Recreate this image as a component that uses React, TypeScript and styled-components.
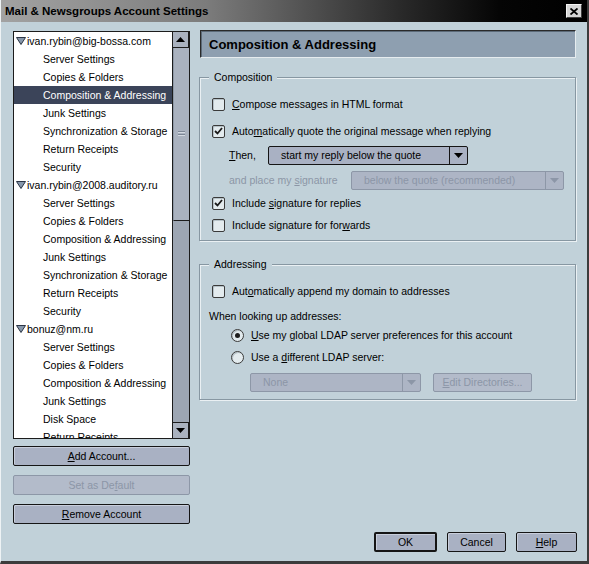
import React from 'react';
import styled, { createGlobalStyle } from 'styled-components';

const GlobalStyle = createGlobalStyle`
  html, body {
    margin: 0;
    padding: 0;
    background: #c1d1d9;
  }
  body {
    font-family: "Liberation Sans", Arial, sans-serif;
    font-size: 10.5px;
    color: #000;
  }
`;

const Window = styled.div`
  width: 589px;
  height: 564px;
  box-sizing: border-box;
  background: #c1d1d9;
  border-left: 1px solid #eef3f5;
  border-right: 2px solid #3c3c3c;
  border-bottom: 3px solid #3c3c3c;
  display: flex;
  flex-direction: column;
  overflow: hidden;
`;

const TitleBar = styled.div`
  height: 22px;
  flex: none;
  display: flex;
  align-items: center;
  justify-content: space-between;
  padding: 0 4px 0 4px;
  background: linear-gradient(to right, #a2a2a2 0%, #7c7c7c 35%, #2a2a2a 68%, #050505 85%, #000 100%);
  font-weight: bold;
  font-size: 11.5px;
  color: #000;
`;

const CloseButton = styled.div`
  width: 16px;
  height: 14px;
  box-sizing: border-box;
  background: #d6d6d6;
  border: 1px solid #f4f4f4;
  border-right-color: #404040;
  border-bottom-color: #404040;
  display: flex;
  align-items: center;
  justify-content: center;
  margin-right: 1px;
`;

const Body = styled.div`
  display: flex;
  gap: 9px;
  padding: 8px 0 0 12px;
`;

const LeftColumn = styled.div`
  width: 177px;
  display: flex;
  flex-direction: column;
`;

const Tree = styled.div`
  margin-top: 1px;
  height: 408px;
  box-sizing: border-box;
  border: 1px solid #1c1c1c;
  background: #fff;
  display: flex;
`;

const TreeList = styled.div`
  flex: 1;
  overflow: hidden;
`;

const TreeRow = styled.div<{ $level: number; $selected?: boolean }>`
  height: 18px;
  display: flex;
  align-items: center;
  white-space: nowrap;
  padding-left: ${p => (p.$level === 0 ? 2 : 29)}px;
  background: ${p => (p.$selected ? '#3b4459' : 'transparent')};
  color: ${p => (p.$selected ? '#fff' : '#000')};
`;

const Twisty = styled.svg`
  width: 10px;
  height: 8px;
  margin-right: 1px;
`;

const ScrollBar = styled.div`
  width: 16px;
  flex: none;
  border-left: 1px solid #1c1c1c;
  background: #9da6b3;
  display: flex;
  flex-direction: column;
`;

const ScrollArrow = styled.div<{ $down?: boolean }>`
  height: 16px;
  box-sizing: border-box;
  background: #aab2bf;
  border: 1px solid #1c1c1c;
  border-left: none;
  border-${p => (p.$down ? 'bottom' : 'top')}: none;
  display: flex;
  align-items: center;
  justify-content: center;
`;

const ScrollThumb = styled.div`
  height: 173px;
  box-sizing: border-box;
  background: #aab2bf;
  border-left: 1px solid #8e98a6;
  border-bottom: 1px solid #1c1c1c;
  display: flex;
  align-items: center;
  justify-content: center;
`;

const ScrollSpace = styled.div`
  flex: 1;
`;

const Grip = styled.div`
  width: 7px;
  height: 6px;
  background: repeating-linear-gradient(to bottom, #7d8796 0 1px, #d4dae2 1px 2px, transparent 2px 3px);
`;

const Button = styled.button<{ $default?: boolean; $width?: number }>`
  height: 20px;
  width: ${p => (p.$width ? `${p.$width}px` : '100%')};
  box-sizing: border-box;
  padding: 0;
  font-family: inherit;
  font-size: 10.5px;
  color: #000;
  background: #a9b1c3;
  border: ${p => (p.$default ? '2px' : '1px')} solid #151515;
  border-radius: 2px;
  box-shadow: inset 1px 1px 0 #c8cedb;
  display: flex;
  align-items: center;
  justify-content: center;

  &:disabled {
    background: #b3bbca;
    border-color: #8d97a7;
    color: #8c96a7;
    box-shadow: none;
  }
`;

const LeftButton = styled(Button)`
  margin-top: 9px;
  &:first-of-type {
    margin-top: 7px;
  }
`;

const EditButton = styled(Button)`
  height: 19px;
  margin-left: 12px;
`;

const RightColumn = styled.div`
  width: 377px;
  display: flex;
  flex-direction: column;
`;

const Header = styled.div`
  margin-left: 1px;
  width: 376px;
  height: 28px;
  box-sizing: border-box;
  background: #8e9fb0;
  border: 1px solid #2a2a2a;
  border-right-color: #e6ecef;
  border-bottom-color: #e6ecef;
  box-shadow: inset 1px 1px 0 #5c6a78;
  display: flex;
  align-items: center;
  padding-left: 8px;
  font-size: 13px;
  font-weight: bold;
`;

const Group = styled.div<{ $top: number; $height: number; $pb: number }>`
  position: relative;
  margin-top: ${p => p.$top}px;
  height: ${p => p.$height}px;
  box-sizing: border-box;
  border: 1px solid #8797a2;
  box-shadow: inset 1px 1px 0 #eaf0f3, 1px 1px 0 #eaf0f3;
  padding: 0 0 ${p => p.$pb}px 0;
  display: flex;
  flex-direction: column;
`;

const Legend = styled.span`
  position: absolute;
  top: -7px;
  left: 9px;
  padding: 0 5px;
  background: #c1d1d9;
  line-height: 13px;
`;

const Row = styled.div<{ $gap: number; $indent: number }>`
  height: 18px;
  margin-top: ${p => p.$gap}px;
  padding-left: ${p => p.$indent}px;
  display: flex;
  align-items: center;
  white-space: nowrap;
`;

const Label = styled.span<{ $disabled?: boolean; $width?: number }>`
  color: ${p => (p.$disabled ? '#8c96a6' : '#000')};
  ${p => (p.$width ? `width: ${p.$width}px; flex: none;` : '')}
`;

const Box = styled.span<{ $round?: boolean }>`
  width: 13px;
  height: 13px;
  box-sizing: border-box;
  flex: none;
  border: 1px solid #3a3a3a;
  border-radius: ${p => (p.$round ? '50%' : '2px')};
  background: #e3ebee;
  box-shadow: inset 1px 1px 0 #b6c2c8;
  margin-right: 7px;
  display: flex;
  align-items: center;
  justify-content: center;
`;

const Dot = styled.span`
  width: 5px;
  height: 5px;
  border-radius: 50%;
  background: #1e1e1e;
`;

const Select = styled.div<{ $width: number; $disabled?: boolean }>`
  width: ${p => p.$width}px;
  height: 19px;
  box-sizing: border-box;
  flex: none;
  display: flex;
  background: ${p => (p.$disabled ? '#adb5c5' : '#a9b1c3')};
  border: 1px solid ${p => (p.$disabled ? '#8d97a7' : '#151515')};
  border-radius: 2px;
  color: ${p => (p.$disabled ? '#8c96a7' : '#000')};
`;

const SelectText = styled.span`
  flex: 1;
  display: flex;
  align-items: center;
  padding-left: 12px;
`;

const SelectArrow = styled.span<{ $disabled?: boolean }>`
  width: 17px;
  flex: none;
  border-left: 1px solid ${p => (p.$disabled ? '#8d97a7' : '#151515')};
  display: flex;
  align-items: center;
  justify-content: center;
`;

const Footer = styled.div`
  display: flex;
  justify-content: flex-end;
  gap: 10px;
  padding: 8px 10px 0 0;
`;

const Tri = ({ up, color = '#000' }: { up?: boolean; color?: string }) => (
  <svg width="9" height="5" viewBox="0 0 9 5">
    <polygon points={up ? '0,5 9,5 4.5,0' : '0,0 9,0 4.5,5'} fill={color} />
  </svg>
);

const Check = ({ checked }: { checked?: boolean }) => (
  <Box>
    {checked && (
      <svg width="9" height="8" viewBox="0 0 9 8">
        <path d="M1 4 L3.5 6.5 L8 1" stroke="#1a1a1a" strokeWidth="1.8" fill="none" />
      </svg>
    )}
  </Box>
);

const Radio = ({ checked }: { checked?: boolean }) => <Box $round>{checked && <Dot />}</Box>;

const Dropdown = ({ width, text, disabled }: { width: number; text: string; disabled?: boolean }) => (
  <Select $width={width} $disabled={disabled}>
    <SelectText>{text}</SelectText>
    <SelectArrow $disabled={disabled}>
      <Tri color={disabled ? '#8c96a7' : '#000'} />
    </SelectArrow>
  </Select>
);

const subItems = [
  'Server Settings',
  'Copies & Folders',
  'Composition & Addressing',
  'Junk Settings',
  'Synchronization & Storage',
  'Return Receipts',
  'Security',
];

const accounts = [
  { name: 'ivan.rybin@big-bossa.com', items: subItems },
  { name: 'ivan.rybin@2008.auditory.ru', items: subItems },
  {
    name: 'bonuz@nm.ru',
    items: ['Server Settings', 'Copies & Folders', 'Composition & Addressing', 'Junk Settings', 'Disk Space', 'Return Receipts'],
  },
];

export default function App() {
  return (
    <>
      <GlobalStyle />
      <Window>
        <TitleBar>
          <span>Mail &amp; Newsgroups Account Settings</span>
          <CloseButton>
            <svg width="8" height="7" viewBox="0 0 8 7">
              <path d="M0.5 0.5 L7.5 6.5 M7.5 0.5 L0.5 6.5" stroke="#000" strokeWidth="1.8" />
            </svg>
          </CloseButton>
        </TitleBar>
        <Body>
          <LeftColumn>
            <Tree>
              <TreeList>
                {accounts.map((acc, ai) => (
                  <React.Fragment key={acc.name}>
                    <TreeRow $level={0}>
                      <Twisty viewBox="0 0 10 8">
                        <polygon points="0.5,0.5 9.5,0.5 5,7.5" fill="#8697ab" stroke="#2b3444" strokeWidth="1" />
                      </Twisty>
                      {acc.name}
                    </TreeRow>
                    {acc.items.map((it, i) => (
                      <TreeRow key={it + i} $level={1} $selected={ai === 0 && i === 2}>
                        {it}
                      </TreeRow>
                    ))}
                  </React.Fragment>
                ))}
              </TreeList>
              <ScrollBar>
                <ScrollArrow>
                  <Tri up />
                </ScrollArrow>
                <ScrollThumb>
                  <Grip />
                </ScrollThumb>
                <ScrollSpace />
                <ScrollArrow $down>
                  <Tri />
                </ScrollArrow>
              </ScrollBar>
            </Tree>
            <LeftButton>
              <u>A</u>dd Account...
            </LeftButton>
            <LeftButton disabled>
              Set as De<u>f</u>ault
            </LeftButton>
            <LeftButton>
              <u>R</u>emove Account
            </LeftButton>
          </LeftColumn>
          <RightColumn>
            <Header>Composition &amp; Addressing</Header>
            <Group $top={19} $height={164} $pb={6}>
              <Legend>Composition</Legend>
              <Row $gap={17} $indent={12}>
                <Check />
                <Label>
                  <u>C</u>ompose messages in HTML format
                </Label>
              </Row>
              <Row $gap={9} $indent={12}>
                <Check checked />
                <Label>
                  Auto<u>m</u>atically quote the original message when replying
                </Label>
              </Row>
              <Row $gap={6} $indent={29}>
                <Label $width={39}>
                  <u>T</u>hen,
                </Label>
                <Dropdown width={200} text="start my reply below the quote" />
              </Row>
              <Row $gap={7} $indent={29}>
                <Label $disabled $width={122}>
                  and place my <u>s</u>ignature
                </Label>
                <Dropdown width={213} text="below the quote (recommended)" disabled />
              </Row>
              <Row $gap={5} $indent={12}>
                <Check checked />
                <Label>
                  Include <u>s</u>ignature for replies
                </Label>
              </Row>
              <Row $gap={4} $indent={12}>
                <Check />
                <Label>
                  Include signature for for<u>w</u>ards
                </Label>
              </Row>
            </Group>
            <Group $top={23} $height={136} $pb={8}>
              <Legend>Addressing</Legend>
              <Row $gap={17} $indent={12}>
                <Check />
                <Label>
                  Aut<u>o</u>matically append my domain to addresses
                </Label>
              </Row>
              <Row $gap={7} $indent={9}>
                <Label>When looking up addresses:</Label>
              </Row>
              <Row $gap={1} $indent={31}>
                <Radio checked />
                <Label>
                  <u>U</u>se my global LDAP server preferences for this account
                </Label>
              </Row>
              <Row $gap={4} $indent={31}>
                <Radio />
                <Label>
                  Use a <u>d</u>ifferent LDAP server:
                </Label>
              </Row>
              <Row $gap={7} $indent={50}>
                <Dropdown width={171} text="None" disabled />
                <EditButton $width={99} disabled>
                  <u>E</u>dit Directories...
                </EditButton>
              </Row>
            </Group>
          </RightColumn>
        </Body>
        <Footer>
          <Button $default $width={63}>
            OK
          </Button>
          <Button $width={59}>Cancel</Button>
          <Button $width={61}>
            <u>H</u>elp
          </Button>
        </Footer>
      </Window>
    </>
  );
}
